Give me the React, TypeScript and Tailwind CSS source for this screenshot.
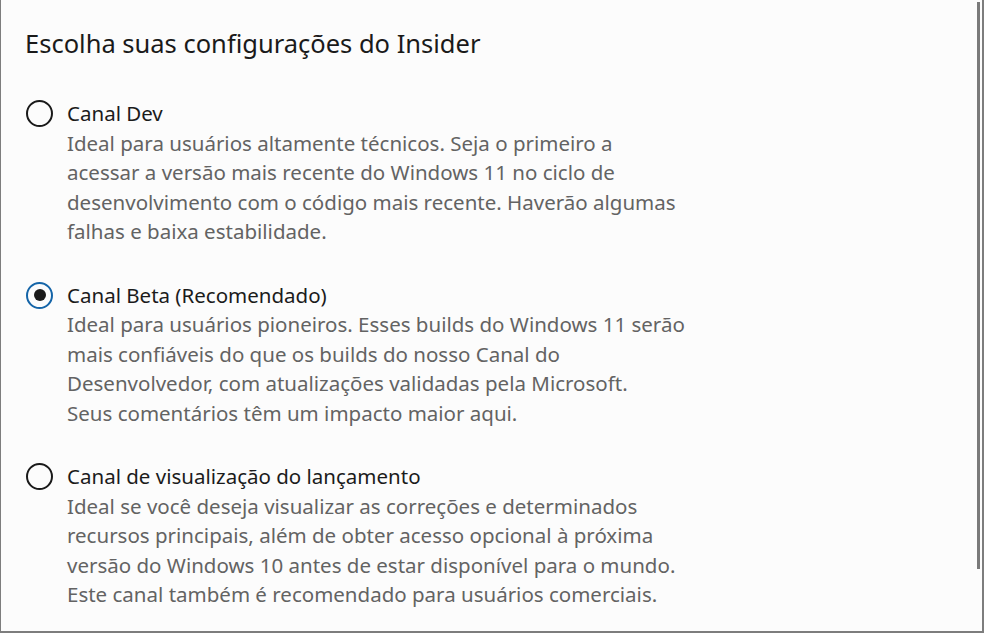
import React from 'react';

type Channel = {
  label: string;
  lines: string[];
  selected?: boolean;
};

const CHANNELS: Channel[] = [
  {
    label: 'Canal Dev',
    lines: [
      'Ideal para usuários altamente técnicos. Seja o primeiro a',
      'acessar a versão mais recente do Windows 11 no ciclo de',
      'desenvolvimento com o código mais recente. Haverão algumas',
      'falhas e baixa estabilidade.',
    ],
  },
  {
    label: 'Canal Beta (Recomendado)',
    selected: true,
    lines: [
      'Ideal para usuários pioneiros. Esses builds do Windows 11 serão',
      'mais confiáveis do que os builds do nosso Canal do',
      'Desenvolvedor, com atualizações validadas pela Microsoft.',
      'Seus comentários têm um impacto maior aqui.',
    ],
  },
  {
    label: 'Canal de visualização do lançamento',
    lines: [
      'Ideal se você deseja visualizar as correções e determinados',
      'recursos principais, além de obter acesso opcional à próxima',
      'versão do Windows 10 antes de estar disponível para o mundo.',
      'Este canal também é recomendado para usuários comerciais.',
    ],
  },
];

function Radio({ selected }: { selected?: boolean }) {
  if (selected) {
    return (
      <span className="flex size-[27px] shrink-0 items-center justify-center rounded-full border-[2.5px] border-[#1565a8]">
        <span className="size-[12px] rounded-full bg-[#1a1a1a]" />
      </span>
    );
  }
  return <span className="size-[27px] shrink-0 rounded-full border-2 border-[#1a1a1a]" />;
}

function ChannelOption({ channel }: { channel: Channel }) {
  return (
    <div className="flex gap-[14px]">
      <div className="flex h-[29px] items-center">
        <Radio selected={channel.selected} />
      </div>
      <div className="flex flex-col text-[20.5px] leading-[29.5px]">
        <span className="text-[#1b1b1b]">{channel.label}</span>
        {channel.lines.map((line) => (
          <span key={line} className="whitespace-nowrap text-[#636363]">
            {line}
          </span>
        ))}
      </div>
    </div>
  );
}

export default function App() {
  return (
    <div
      className="flex h-[633px] w-[984px] border-l border-b-2 border-r-2 border-[#7d7d7d] bg-[#fcfcfc]"
      style={{ fontFamily: '"Noto Sans", "Open Sans", sans-serif' }}
    >
      <div className="flex flex-1 flex-col pl-[24px] pt-[27px]">
        <h1 className="text-[25.5px] leading-[32px] text-[#1a1a1a]">Escolha suas configurações do Insider</h1>
        <div className="mt-[40px] flex flex-col gap-[34px] pl-[1px]">
          {CHANNELS.map((c) => (
            <ChannelOption key={c.label} channel={c} />
          ))}
        </div>
      </div>
      <div className="mr-[2px] mt-[2px] h-[567px] w-[3px] bg-[#7a7a7a]" />
    </div>
  );
}
